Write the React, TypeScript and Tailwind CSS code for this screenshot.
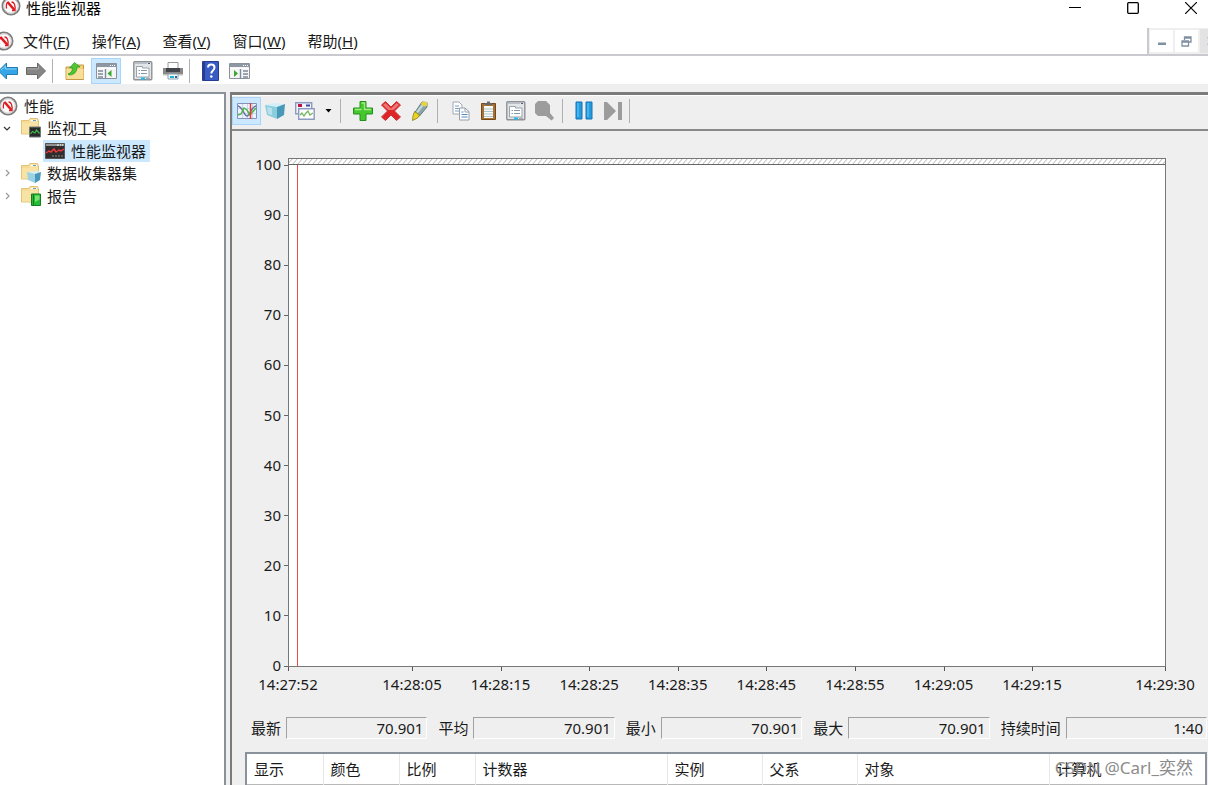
import React from 'react';

const tree = [
    { id: 'tools', label: '监视工具', open: true, icon: <FolderIcon kind="chart" /> },
    { id: 'perfmon', label: '性能监视器', selected: true, icon: <MonitorIcon /> },
    { id: 'sets', label: '数据收集器集', open: false, icon: <FolderIcon kind="cube" /> },
    { id: 'reports', label: '报告', open: false, icon: <FolderIcon kind="report" /> },
];

const menus = [
    { label: '文件', hotkey: 'F' },
    { label: '操作', hotkey: 'A' },
    { label: '查看', hotkey: 'V' },
    { label: '窗口', hotkey: 'W' },
    { label: '帮助', hotkey: 'H' },
];

const yTicks = [100, 90, 80, 70, 60, 50, 40, 30, 20, 10, 0];

const xTicks = [
    { second: 0, label: '14:27:52' },
    { second: 14, label: '14:28:05' },
    { second: 24, label: '14:28:15' },
    { second: 34, label: '14:28:25' },
    { second: 44, label: '14:28:35' },
    { second: 54, label: '14:28:45' },
    { second: 64, label: '14:28:55' },
    { second: 74, label: '14:29:05' },
    { second: 84, label: '14:29:15' },
    { second: 99, label: '14:29:30' },
];

const stats = [
    { id: 'last', label: '最新', value: '70.901' },
    { id: 'average', label: '平均', value: '70.901' },
    { id: 'minimum', label: '最小', value: '70.901' },
    { id: 'maximum', label: '最大', value: '70.901' },
    { id: 'duration', label: '持续时间', value: '1:40' },
];

const columns = [
    { label: '显示', width: 'w-[76px]' },
    { label: '颜色', width: 'w-[76px]' },
    { label: '比例', width: 'w-[76px]' },
    { label: '计数器', width: 'w-[192px]' },
    { label: '实例', width: 'w-[95px]' },
    { label: '父系', width: 'w-[95px]' },
    { label: '对象', width: 'w-[192px]' },
    { label: '计算机', width: 'w-auto' },
];

function App() {
    return (
        <div className="flex h-screen flex-col overflow-hidden bg-[#efefef] text-[15px] leading-5 text-[#1a1a1a] font-['Noto_Sans','Noto_Sans_CJK_SC',sans-serif]">
            <TitleBar />
            <MenuBar />
            <MainToolbar />
            <div className="mt-2 flex min-h-0 flex-1 gap-1">
                <TreePanel />
                <main className="flex min-w-0 flex-1 flex-col overflow-hidden border-t-3 border-l-2 border-[#7b7b7b]">
                    <ChartToolbar />
                    <Chart />
                    <Stats />
                    <CounterTable />
                </main>
            </div>
        </div>
    );
}

const TitleBar = () => (
    <header className="flex h-7 items-start justify-between bg-white">
        <div className="flex gap-[5px] pl-px">
            <div className="-mt-1">
                <GaugeIcon />
            </div>
            <h1 className="leading-4 text-black">性能监视器</h1>
        </div>
        <div className="flex">
            <button aria-label="最小化" className="flex h-4 w-[58px] items-center justify-center">
                <svg width="12" height="12" viewBox="0 0 12 12" stroke="#000" shapeRendering="crispEdges"><path d="M0 5.500h12" /></svg>
            </button>
            <button aria-label="最大化" className="flex h-4 w-[58px] items-center justify-center">
                <svg width="12" height="12" viewBox="0 0 12 12" fill="none" stroke="#000"><rect x=".7" y=".7" width="10.600" height="10.600" rx="1" strokeWidth="1.300" /></svg>
            </button>
            <button aria-label="关闭" className="-mr-3 flex h-4 w-[58px] items-center justify-center">
                <svg width="12" height="12" viewBox="0 0 12 12" stroke="#000" strokeWidth="1.200"><path d="M0 0l12 12M12 0L0 12" /></svg>
            </button>
        </div>
    </header>
);

const MenuBar = () => (
    <nav className="flex h-7 shrink-0 items-stretch justify-between border-b-2 border-[#c9c9cf] bg-white">
        <div className="flex items-center">
            <div className="-ml-1.5">
                <GaugeIcon />
            </div>
            <div className="flex gap-[22px] pl-[9px]">
                {menus.map(menu => (
                    <button key={menu.hotkey}>
                        {menu.label}(<span className="underline underline-offset-1">{menu.hotkey}</span>)
                    </button>
                ))}
            </div>
        </div>
        <div className="-mr-4 flex items-center gap-0.5 border-l-2 border-[#c9c9cf] bg-[#efefef] pl-px">
            <button aria-label="最小化窗口" className="flex h-[22px] w-[23px] items-center justify-center bg-white">
                <svg width="10" height="10" viewBox="0 0 10 10"><path d="M1 6.500h8V9H1z" fill="#8090a3" /></svg>
            </button>
            <button aria-label="还原窗口" className="flex h-[22px] w-[23px] items-center justify-center bg-white">
                <svg width="11" height="11" viewBox="0 0 11 11" fill="none" stroke="#8090a3" strokeWidth="1.300"><path d="M3.500 4V1h6.500v5H8M3 2h7.500" /><path d="M1 5h6.500v5H1zM.5 6h7.500" /></svg>
            </button>
            <button aria-label="关闭窗口" className="flex h-6 w-6 items-center justify-center bg-[#e3e3e3]">
                <svg width="10" height="10" viewBox="0 0 10 10" stroke="#8794a5" strokeWidth="2"><path d="M1 1l8 8M9 1L1 9" /></svg>
            </button>
        </div>
    </nav>
);

const Divider = () => <div className="h-6 w-px shrink-0 bg-[#b0b0b0]" />;

const MainToolbar = () => (
    <div className="flex h-7 shrink-0 items-center bg-white pt-0.5">
        <button aria-label="后退" className="-ml-0.5"><ArrowIcon /></button>
        <button aria-label="前进" className="ml-2"><ArrowIcon forward /></button>
        <div className="mx-1.5"><Divider /></div>
        <button aria-label="向上一级" className="ml-1.5"><UpFolderIcon /></button>
        <button aria-label="显示控制台树" aria-pressed="true" className="ml-1.5 flex h-[26px] w-[30px] items-center justify-center border border-[#a9d5fb] bg-[#cce8ff]"><PaneIcon /></button>
        <button aria-label="属性" className="ml-3"><PropertiesIcon /></button>
        <button aria-label="打印" className="ml-2.5"><PrinterIcon /></button>
        <div className="ml-1.5"><Divider /></div>
        <button aria-label="帮助主题" className="ml-3"><HelpIcon /></button>
        <button aria-label="操作窗格" className="ml-2.5"><PaneIcon flipped /></button>
    </div>
);

const TreePanel = () => (
    <aside className="w-[226px] shrink-0 border-t-2 border-r-2 border-[#8b919b] bg-white">
        <div className="flex h-[23px] items-center gap-1.5">
            <div className="-ml-0.5"><GaugeIcon /></div>
            <span>性能</span>
        </div>
        <ul className="grid h-[90px] grid-rows-4">
            {tree.map(item => (
                <li key={item.id} className="flex items-center">
                    {item.selected ? (
                        <button className="ml-[43px] flex h-[22px] items-center gap-1.5 bg-[#cce8ff] pr-1 pl-0.5">
                            {item.icon}
                            <span>{item.label}</span>
                        </button>
                    ) : (
                        <button aria-expanded={item.open} className="flex items-center">
                            <span className="ml-0.5 flex w-[19px]"><Chevron open={item.open} /></span>
                            {item.icon}
                            <span className="ml-1.5">{item.label}</span>
                        </button>
                    )}
                </li>
            ))}
        </ul>
    </aside>
);

const ChartToolbar = () => (
    <div className="flex h-9 shrink-0 items-center border-t border-b-2 border-t-white border-b-[#8a8a8a] pb-1">
        <button aria-label="查看当前活动" aria-pressed="true" className="flex h-7 w-[29px] items-center justify-center border border-[#a9d5fb] bg-[#cce8ff]"><GraphIcon /></button>
        <button aria-label="查看日志数据" className="ml-1"><CubeIcon /></button>
        <button aria-label="更改图形类型" className="ml-2.5 flex items-center gap-2.5">
            <GraphTypeIcon />
            <svg width="7" height="4" viewBox="0 0 7 4"><path d="M.5 0h6L3.500 3.500z" fill="#000" /></svg>
        </button>
        <div className="mx-2"><Divider /></div>
        <button aria-label="添加" className="ml-1"><PlusIcon /></button>
        <button aria-label="删除" className="ml-2"><DeleteIcon /></button>
        <button aria-label="突出显示" className="ml-2.5"><HighlightIcon /></button>
        <div className="mx-2"><Divider /></div>
        <button aria-label="复制属性" className="ml-1.5"><CopyIcon /></button>
        <button aria-label="粘贴计数器列表" className="ml-2.5"><PasteIcon /></button>
        <button aria-label="图表属性" className="ml-2"><PropertiesIcon /></button>
        <button aria-label="缩放" className="ml-2"><ZoomIcon /></button>
        <div className="ml-2"><Divider /></div>
        <button aria-label="冻结显示" className="ml-3"><PauseIcon /></button>
        <button aria-label="更新数据" className="ml-2.5"><StepIcon /></button>
        <div className="ml-1.5"><Divider /></div>
    </div>
);

const Chart = () => (
    <div className="pt-[27px] pr-[43px] pl-14">
        <svg className="block h-[559px] w-full overflow-visible" role="img" aria-label="性能图表">
            <defs>
                <pattern id="hatch" width="5" height="6" patternUnits="userSpaceOnUse">
                    <path d="M-1 7L5 0M4 7L10 0" stroke="#b4b4b4" strokeWidth="1" />
                </pattern>
            </defs>
            <g shapeRendering="crispEdges">
                <rect x="0" y="0" width="100%" height="509" fill="#fff" />
                <rect x="0" y="0" width="100%" height="7" fill="url(#hatch)" />
                <rect x="0.500" y="0.500" width="100%" height="508" fill="none" stroke="#777" />
                <line x1="0" x2="100%" y1="6.500" y2="6.500" stroke="#666" />
                <line x1="9.500" x2="9.500" y1="7" y2="508" stroke="#f04848" />
                {yTicks.map(tick => (
                    <line key={tick} x1="-4" x2="0" y1={508 - tick * 5.01} y2={508 - tick * 5.01} stroke="#666" />
                ))}
                {xTicks.map(tick => (
                    <line key={tick.label} x1={`${(tick.second / 99) * 100}%`} x2={`${(tick.second / 99) * 100}%`} y1="509" y2="513" stroke="#555" transform="translate(0.5 0)" />
                ))}
            </g>
            <g fill="#1a1a1a" className="text-[15px]">
                {yTicks.map(tick => (
                    <text key={tick} x="-7" y={Math.round(513 - tick * 5.01)} textAnchor="end">{tick}</text>
                ))}
                {xTicks.map(tick => (
                    <text key={tick.label} x={`${(tick.second / 99) * 100}%`} y="532" textAnchor="middle">{tick.label}</text>
                ))}
            </g>
        </svg>
    </div>
);

const Stats = () => (
    <div className="flex gap-[11px] pr-px pl-[19px]">
        {stats.map(stat => (
            <div key={stat.id} className="flex min-w-0 flex-1 basis-auto items-center gap-[5px]">
                <label htmlFor={stat.id} className="shrink-0">{stat.label}</label>
                <input
                    id={stat.id}
                    readOnly
                    value={stat.value}
                    className="h-[22px] w-0 min-w-0 flex-1 basis-[100px] border border-t-[#a0a0a0] border-r-white border-b-white border-l-[#a0a0a0] bg-transparent pr-[3px] text-right outline-none"
                />
            </div>
        ))}
    </div>
);

const CounterTable = () => (
    <div className="relative mt-[13px] mr-px ml-[13px] min-h-[60px] flex-1 border-2 border-b-0 border-[#8b919b] bg-white">
        <table className="w-full table-fixed border-collapse">
            <thead>
                <tr className="h-[30px] border-b border-[#b8b8b8]">
                    {columns.map(column => (
                        <th key={column.label} scope="col" className={`${column.width} border-r border-[#e8e8e8] pl-[7px] text-left font-normal last:border-r-0`}>
                            {column.label}
                        </th>
                    ))}
                </tr>
            </thead>
        </table>
        <span className="pointer-events-none absolute top-1 right-3 text-[17px] leading-5 text-[#8c8c8c]">CSDN @Carl_奕然</span>
    </div>
);

function GaugeIcon() {
    return (
        <svg width="20" height="20" viewBox="0 0 20 20" fill="none" className="block">
            <circle cx="10" cy="10" r="8.600" fill="#fbfbfb" stroke="#7d7d7d" strokeWidth="1.800" />
            <circle cx="10" cy="10" r="7.200" stroke="#cfcfcf" />
            <path d="M5.500 12.500C5 9 5.500 7 7 6" stroke="#df1c22" strokeWidth="1.300" />
            <path d="M6.500 6l7 8" stroke="#df1c22" strokeWidth="2.600" />
            <path d="M10.500 6c2.500 0 4 2.500 3.500 8.500h-3" stroke="#df1c22" strokeWidth="1.300" />
        </svg>
    );
}

function Chevron({ open }: { open?: boolean }) {
    return (
        <svg width="10" height="10" viewBox="0 0 10 10" fill="none" stroke={open ? '#333' : '#999'} strokeWidth="1.200">
            <path d={open ? 'M2 4l3 3 3-3' : 'M4 2l3 3-3 3'} />
        </svg>
    );
}

function FolderIcon({ kind }: { kind: 'chart' | 'cube' | 'report' }) {
    return (
        <svg width="20" height="20" viewBox="0 0 20 20" className="block">
            <path d="M.5 2.500h7L9 .5h7.500l1 2V16H.5z" fill="#f6dc92" stroke="#dcb865" strokeWidth=".8" />
            <path d="M9.500 2.500H16" stroke="#fff" strokeWidth="1.500" />
            <path d="M12 2.500h3" stroke="#5f9fd0" />
            <path d="M1 5h7l1.500-1H17v11.500H1z" fill="#f9e3a4" />
            {kind === 'chart' && (
                <>
                    <path d="M8.500 9h11v10h-11z" fill="#292b2a" stroke="#777" />
                    <path d="M9.500 16l2-2.500 2.500 1.500 1.500-3 3 3.500" fill="none" stroke="#3dc04b" strokeWidth="1.200" />
                </>
            )}
            {kind === 'cube' && (
                <>
                    <path d="M6 9l9-1 5 1-6 2z" fill="#d5eff7" />
                    <path d="M6 9l8 2v9l-7-3z" fill="#9bd3e4" />
                    <path d="M14 11l6-2-1 8-5 3z" fill="#4798bb" />
                </>
            )}
            {kind === 'report' && (
                <>
                    <path d="M10.500 8h9v11.500h-9z" fill="#27ba35" stroke="#117c20" />
                    <path d="M12.500 8v11" stroke="#117c20" />
                    <path d="M14 9.500h4.500v4L14 16z" fill="#75e375" />
                </>
            )}
        </svg>
    );
}

function MonitorIcon() {
    return (
        <svg width="20" height="18" viewBox="0 0 20 18" className="block">
            <path d="M.5 1.500h19v15H.5z" fill="#312c2d" stroke="#555" />
            <path d="M1 2h18v2H1z" fill="#929292" />
            <path d="M12 3h2m1 0h1m1 0h1" stroke="#fff" />
            <path d="M1 11l3-2 2 1 3-3 2 3 3-2 2 1 3-2" fill="none" stroke="#ed393b" strokeWidth="1.500" />
            <path d="M7 14h2m1 0h2m1 0h2m1 0h2" stroke="#888" />
        </svg>
    );
}

function ArrowIcon({ forward }: { forward?: boolean }) {
    return (
        <svg width="20" height="18" viewBox="0 0 20 18" className="block">
            <path
                d={forward ? 'M19.500 9L11.500 1v4.500H.5v7h11V17z' : 'M.5 9l8-8v4.500h11v7h-11V17z'}
                fill={forward ? '#858585' : '#35a5e5'}
                stroke={forward ? '#686868' : '#217db8'}
                strokeLinejoin="round"
            />
            <path d={forward ? 'M1.500 7h11V4' : 'M3 8l4.500-4v3h11'} fill="none" stroke={forward ? '#aaa' : '#81d2f8'} />
        </svg>
    );
}

function UpFolderIcon() {
    return (
        <svg width="20" height="20" viewBox="0 0 20 20" className="block">
            <path d="M1 6h9l2-2h6.500v14.500H1z" fill="#f1cf76" stroke="#c49b43" />
            <path d="M1.500 8h17v10h-17z" fill="#f8df98" />
            <path d="M3 13c3-1 4.500-3 4.500-6H4.500l5-5.500 5.500 4.500h-3c0 5-3 8-8 8z" fill="#4ac732" stroke="#279323" strokeWidth=".7" />
        </svg>
    );
}

function PaneIcon({ flipped }: { flipped?: boolean }) {
    return (
        <svg width="21" height="18" viewBox="0 0 21 18" className="block" fill="none">
            <path d="M.5 1.500h20v15H.5z" fill="#f5f5f5" stroke="#8b929b" />
            <path d="M1 2h19v3H1z" fill="#8e98a5" />
            <path d="M14 3.500h1m1 0h1m1 0h1M1 6.500h19" stroke="#fff" />
            <path d={flipped ? 'M11.500 7v10M14 9h5m-5 3h5m-5 3h5' : 'M9.500 7v10M2 9h5m-5 3h5m-5 3h5'} stroke="#7e8b9c" strokeWidth="1.400" />
            <path d={flipped ? 'M5 8v7l4-3.500z' : 'M15.500 8v7l-4-3.500z'} fill="#37a92c" />
        </svg>
    );
}

function PropertiesIcon() {
    return (
        <svg width="20" height="20" viewBox="0 0 20 20" className="block" fill="none">
            <rect x=".8" y=".8" width="18" height="18" rx="1" fill="#e3e6e9" stroke="#8d9297" strokeWidth="1.400" />
            <path d="M2 2.500h12" stroke="#b8bfc7" />
            <path d="M15 2.500h2" stroke="#557" />
            <path d="M3.500 7V5.500h6V7h6.500v9H3.500z" fill="#fff" stroke="#9ba2a8" />
            <path d="M5.500 9.500H7m1 0h6M5.500 12.500H7m1 0h6" stroke="#8298ac" />
            <path d="M8 17.500h4" stroke="#18bdf2" strokeWidth="2" />
            <path d="M13 17.500h4" stroke="#aaa" strokeWidth="1.500" />
        </svg>
    );
}

function PrinterIcon() {
    return (
        <svg width="20" height="20" viewBox="0 0 20 20" className="block">
            <path d="M5 1.500h10V8H5z" fill="#fff" stroke="#999" />
            <path d="M0 7h20v7H0z" fill="#888" />
            <path d="M3 7h14v4H3z" fill="#42464a" />
            <path d="M0 13h20v1.500H0z" fill="#c2c2c2" />
            <path d="M5 13h10v5H5z" fill="#eef8fd" stroke="#8fa3b0" />
            <path d="M7 15h4v2H7z" fill="#24acda" />
            <path d="M12 15h2v2h-2z" fill="#336598" />
        </svg>
    );
}

function HelpIcon() {
    return (
        <svg width="17" height="20" viewBox="0 0 17 20" className="block" fill="none">
            <path d="M.5.5h16v19H.5z" fill="#385cc3" stroke="#253f8e" />
            <path d="M2 1v18" stroke="#263d91" strokeWidth="2" />
            <path d="M6 6.500C6 2.500 12.500 2.500 12.500 6.500c0 3-3.200 2.800-3.200 6" stroke="#fff" strokeWidth="2" />
            <circle cx="9.300" cy="15.500" r="1.300" fill="#fff" />
        </svg>
    );
}

function GraphIcon() {
    return (
        <svg width="20" height="18" viewBox="0 0 20 18" className="block" fill="none">
            <path d="M.5 1.500h19v15H.5z" fill="#eef4ff" stroke="#8493bb" />
            <path d="M1 6.500h18M1 11.500h18M5.500 2v14M10.500 2v14M15.500 2v14" stroke="#c8d4ea" />
            <path d="M1 4c5 1 6 10 9 10s4-9 9-10" stroke="#6672a6" strokeWidth="1.400" />
            <path d="M1 13l3-1 3-6 3 2 3 5 6-7" stroke="#55b442" strokeWidth="1.500" />
            <path d="M13.500 1v16" stroke="#e83a30" strokeWidth="1.500" />
        </svg>
    );
}

function CubeIcon() {
    return (
        <svg width="20" height="18" viewBox="0 0 20 18" className="block">
            <path d="M0 3l8-2 12 1-8 3z" fill="#d3eef6" />
            <path d="M0 3l12 2v12L2 13z" fill="#8ccddd" />
            <path d="M12 5l8-3-1 11-7 4z" fill="#4798b9" />
            <path d="M2 5l5 1v7l-4-1z" fill="#b8e1ec" />
        </svg>
    );
}

function GraphTypeIcon() {
    return (
        <svg width="20" height="18" viewBox="0 0 20 18" className="block" fill="none">
            <path d="M.7.7h16v11H.7z" fill="#f4f5fa" stroke="#8d9bc0" strokeWidth="1.400" />
            <path d="M3 2h4v3H3z" fill="#b91645" />
            <path d="M11 2.500h4v2h-4z" fill="#394ba0" />
            <path d="M3.700 6.700h15.500v10.500H3.700z" fill="#fff" stroke="#8d9bc0" strokeWidth="1.400" />
            <path d="M5 13l2-2 2 3 2-3 2-2 2 4 3-2" stroke="#71b85c" strokeWidth="1.300" />
        </svg>
    );
}

function PlusIcon() {
    return (
        <svg width="20" height="20" viewBox="0 0 20 20" className="block">
            <path d="M7 .5h6V7h6.500v6H13v6.500H7V13H.5V7H7z" fill="#45c72d" stroke="#23901c" strokeLinejoin="round" />
            <path d="M8.500 2h3v6.500H18M2 8.500h6.500" fill="none" stroke="#a1ec83" strokeWidth="1.300" />
        </svg>
    );
}

function DeleteIcon() {
    return (
        <svg width="20" height="20" viewBox="0 0 20 20" className="block">
            <path d="M.5 4l4-3.500L10 6 15.500.5l4 3.500-6 6 6 6-4 3.500L10 14l-5.500 5.500-4-3.500 6-6z" fill="#df2428" stroke="#c4383b" strokeLinejoin="round" />
            <path d="M2 4l2.500-2L10 7.500 15.500 2 18 4l-5.500 5h-5z" fill="#ef7474" />
        </svg>
    );
}

function HighlightIcon() {
    return (
        <svg width="18" height="20" viewBox="0 0 18 20" className="block">
            <path d="M11 1l5 .5V6L8.500 15l-5-3z" fill="#8ba4a6" stroke="#647f82" />
            <path d="M11 3l2 1-6 8-2-1z" fill="#c5d9db" />
            <path d="M11.500.5L16 1v4l-3 .5-3-3z" fill="#e8d33a" />
            <path d="M3.500 10.500l5 3.500-2 3-5 2.500.5-4.500z" fill="#e9d51d" stroke="#8d7c17" strokeWidth=".8" />
        </svg>
    );
}

function CopyIcon() {
    return (
        <svg width="18" height="20" viewBox="0 0 18 20" className="block" fill="none">
            <path d="M1 1h6l3 3v9H1z" fill="#fff" stroke="#a0a8b0" />
            <path d="M3 5h4M3 7.500h5M3 10h4" stroke="#789fc4" />
            <path d="M7.500 7H13l4 3.500V19H7.500z" fill="#fff" stroke="#98a0a8" />
            <path d="M13 7v4h4" stroke="#98a0a8" />
            <path d="M9.500 11h2M9.500 13.500h6M9.500 16h6" stroke="#5289c2" />
        </svg>
    );
}

function PasteIcon() {
    return (
        <svg width="18" height="20" viewBox="0 0 18 20" className="block">
            <path d="M1.500 2.500h14v16h-14z" fill="#a47236" stroke="#754815" />
            <path d="M4 5h9v12H4z" fill="#fafcfc" />
            <path d="M4 8h9M4 10.500h9M4 13h9M4 15.500h9" stroke="#b1c1c7" />
            <path d="M5 4V2h2V.5h3V2h2v2z" fill="#62686c" />
        </svg>
    );
}

function ZoomIcon() {
    return (
        <svg width="20" height="20" viewBox="0 0 20 20" className="block">
            <path d="M4 0h8l4 4v8l4 5-2.500 2.500L12 15H4l-3-3V3z" fill="#9c9c9c" />
        </svg>
    );
}

function PauseIcon() {
    return (
        <svg width="18" height="20" viewBox="0 0 18 20" className="block">
            <path d="M1 1h6v17H1zM11 1h6v17h-6z" fill="#249bdc" stroke="#1671b5" />
            <path d="M3 2v14M13 2v14" stroke="#52bcf1" strokeWidth="1.500" />
        </svg>
    );
}

function StepIcon() {
    return (
        <svg width="20" height="20" viewBox="0 0 20 20" className="block">
            <path d="M1 1h3l9 9-9 9H1zM15 1h4v18h-4z" fill="#9c9c9c" />
        </svg>
    );
}

export default App;
